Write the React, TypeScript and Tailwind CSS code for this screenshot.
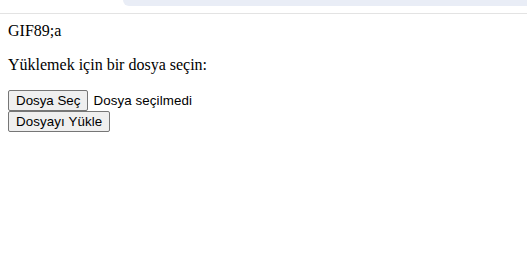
export default function App() {
  return (
    <div className="w-[527px] h-[280px] bg-white overflow-hidden">
      {/* browser chrome remnant */}
      <div className="h-[14px] border-b border-[#e3e3e3] flex">
        <div className="w-[123px]" />
        <div className="flex-1 h-[6px] bg-[#e9edf6] rounded-bl-[10px]" />
      </div>
      <div className="p-2 font-['Liberation_Serif',serif] text-[16px] leading-[18px] text-black">
        <div>GIF89;a</div>
        <p className="mt-4">Yüklemek için bir dosya seçin:</p>
        <form className="mt-4 font-['Liberation_Sans',Arial,sans-serif] text-[13.33px]">
          <div className="flex items-center h-[21px]">
            <button
              type="button"
              className="h-[21px] px-[7px] bg-[#efefef] border border-[#767676] rounded-[2px] leading-none"
            >
              Dosya Seç
            </button>
            <span className="ml-[5px] tracking-[0.1px]">Dosya seçilmedi</span>
          </div>
          <button
            type="submit"
            className="h-[21px] px-[7px] bg-[#efefef] border border-[#767676] rounded-[2px] leading-none tracking-[0.1px]"
          >
            Dosyayı Yükle
          </button>
        </form>
      </div>
    </div>
  );
}
